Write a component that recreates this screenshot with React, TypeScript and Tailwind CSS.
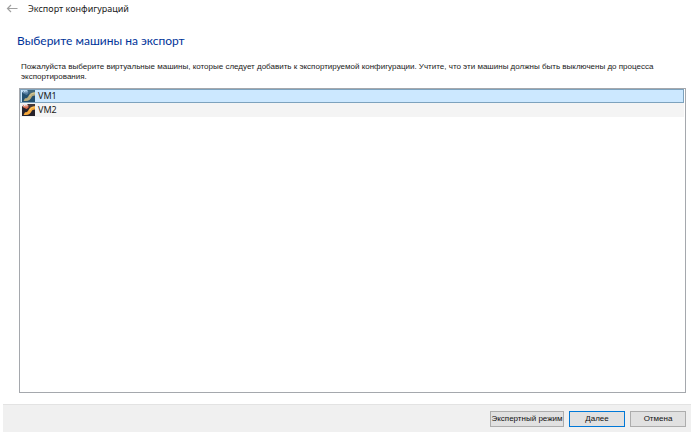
import { useState } from "react";

const machines = ["VM1", "VM2"];

function BackArrow() {
  return (
    <svg viewBox="0 0 12 10" className="h-[10px] w-3" fill="none" stroke="#a0a0a0" strokeWidth="1.2">
      <path d="M11.500 4.500H1.500M5 1 1.500 4.500 5 8" />
    </svg>
  );
}

function MachineIcon({ selected }: { selected: boolean }) {
  const base = selected ? "#24506f" : "#26222b";
  const ribbon = selected ? "#b9ad7d" : "#f6a83b";
  const shine = selected ? "#d2cea0" : "#ffd071";
  const badge = selected ? "#547da0" : "#d8694c";
  const spots = selected ? "#b9d7ee" : "#e9e1e4";
  return (
    <svg viewBox="0 0 13 13" className="h-3 w-[13px] shrink-0" preserveAspectRatio="none" aria-hidden="true">
      <rect width="13" height="13" fill={base} />
      <path d="M6 0h7v2.500L8 5z" fill={selected ? "#3f687f" : "#443a3c"} />
      <path d="M13 2.500v3.500c-2 0-3 .8-3.700 2.500C8.300 10.500 7 12 4 12H1.500L3 9c2 0 2.800-.8 3.500-2.500C7.500 4 9.500 2.500 13 2.500z" fill={ribbon} />
      <path d="M13 3.200c-3 .3-4.300 1.300-5.200 3.500" fill="none" stroke={shine} strokeWidth="1" />
      <path d="M1 1h5.500v3L4.500 5.500 1 3.500z" fill={badge} />
      <path d="M0 0h5.500v2.500H0z" fill={spots} />
      <path d="M1 1h1v1H1zM3.500 1h1v1h-1z" fill={badge} />
    </svg>
  );
}

export default function App() {
  const [selected, setSelected] = useState("VM1");
  const button =
    "flex h-4 items-center justify-center border bg-[#e1e1e1] font-['Liberation_Sans',sans-serif] text-[8px] leading-3 whitespace-nowrap text-[#111]";

  return (
    <div className="flex h-screen flex-col bg-white pr-[9px] pb-[6px] pl-[3px] font-['Noto_Sans',sans-serif] text-[#1a1a1a]">
      <header className="flex h-[18px] items-center gap-[10px] pl-[3px]">
        <button type="button" aria-label="Назад">
          <BackArrow />
        </button>
        <span className="text-[9px] leading-3">Экспорт конфигураций</span>
      </header>
      <main className="flex min-h-0 flex-1 flex-col pt-[14px] pr-[5px] pb-[11px] pl-4">
        <h1 className="-ml-[2px] font-['Lato',sans-serif] text-[12px] leading-[18px] text-[#003399]">
          Выберите машины на экспорт
        </h1>
        <p className="mt-3 mb-[6px] pr-6 pl-[2px] font-['Liberation_Sans',sans-serif] text-[8px] leading-[10px]">
          Пожалуйста выберите виртуальные машины, которые следует добавить к экспортируемой
          конфигурации. Учтите, что эти машины должны быть выключены до процесса экспортирования.
        </p>
        <ul
          role="listbox"
          aria-label="Виртуальные машины"
          className="min-h-0 flex-1 border border-[#a5a8ad] pr-px"
        >
          {machines.map((name) => (
            <li
              key={name}
              role="option"
              tabIndex={0}
              aria-selected={name === selected}
              onClick={() => setSelected(name)}
              className={`flex h-[14px] items-center gap-[3px] border pl-px text-[9px] leading-3 ${
                name === selected ? "border-[#7da2bd] bg-[#cce8ff]" : "border-[#f4f4f4] bg-[#f4f4f4]"
              }`}
            >
              <MachineIcon selected={name === selected} />
              {name}
            </li>
          ))}
        </ul>
      </main>
      <footer className="flex h-7 items-center justify-end gap-[5px] border-t border-[#e3e3e3] bg-[#f0f0f0] pr-[5px]">
        <button type="button" className={`${button} w-[74px] border-[#adadad]`}>
          Экспертный режим
        </button>
        <button type="button" className={`${button} w-14 border-[#0078d7] outline-1 -outline-offset-1 outline-[#0078d7]`}>
          Далее
        </button>
        <button type="button" className={`${button} w-14 border-[#adadad]`}>
          Отмена
        </button>
      </footer>
    </div>
  );
}
